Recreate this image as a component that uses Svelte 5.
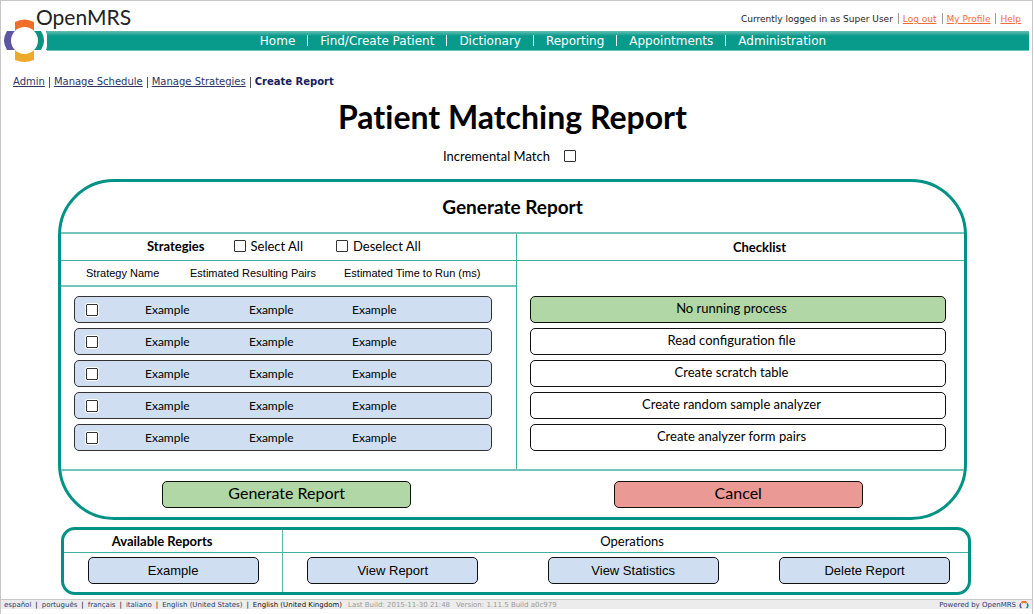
<script>
  const navItems = ['Home', 'Find/Create Patient', 'Dictionary', 'Reporting', 'Appointments', 'Administration'];
  const userLinks = ['Log out', 'My Profile', 'Help'];
  const crumbs = ['Admin', 'Manage Schedule', 'Manage Strategies'];
  const languages = ['español', 'português', 'français', 'italiano', 'English (United States)'];
  const steps = [
    'No running process',
    'Read configuration file',
    'Create scratch table',
    'Create random sample analyzer',
    'Create analyzer form pairs'
  ];
  const operations = ['View Report', 'View Statistics', 'Delete Report'];

  let incremental = $state(false);
  let selected = $state([false, false, false, false, false]);
  let selectAll = $state(false);
  let deselectAll = $state(false);

  function onSelectAll() {
    if (selectAll) {
      deselectAll = false;
      selected = selected.map(() => true);
    }
  }

  function onDeselectAll() {
    if (deselectAll) {
      selectAll = false;
      selected = selected.map(() => false);
    }
  }
</script>

<div class="page">
  <header>
    <svg class="logo" viewBox="0 0 46 46" aria-hidden="true">
      <path d="M14 4 Q23.500 -1 33 4 V22 H14Z" fill="#f26c2a" />
      <path d="M14 42 Q23.500 46 33 42 V22 H14Z" fill="#eda929" />
      <path d="M6 13 Q0 22.500 6 32 H14 V13Z" fill="#6055a3" />
      <path d="M40 13 Q46 22.500 40 32 H33 V13Z" fill="#0a9385" />
      <path d="M45 13 Q48 22.500 45 32 H46 V13Z" fill="#089a8b" />
      <circle cx="23.500" cy="22.500" r="13.500" fill="#fff" />
    </svg>
    <div class="top">
      <span class="brand">OpenMRS</span>
      <div class="user">
        <span class="who">Currently logged in as Super User</span>
        {#each userLinks as link}
          <a href="#top">{link}</a>
        {/each}
      </div>
    </div>
    <nav>
      {#each navItems as item}
        <a href="#top">{item}</a>
      {/each}
    </nav>
  </header>

  <div class="crumbs">
    {#each crumbs as crumb}
      <a href="#top">{crumb}</a><i></i>
    {/each}
    <b>Create Report</b>
  </div>

  <main>
    <h1>Patient Matching Report</h1>
    <label class="incremental">Incremental Match <input type="checkbox" bind:checked={incremental} /></label>

    <section class="generate">
      <h2>Generate Report</h2>
      <div class="halves">
        <div class="strategies">
          <div class="bar">
            <h3>Strategies</h3>
            <label><input type="checkbox" bind:checked={selectAll} onchange={onSelectAll} />Select All</label>
            <label><input type="checkbox" bind:checked={deselectAll} onchange={onDeselectAll} />Deselect All</label>
          </div>
          <table>
            <thead>
              <tr>
                <th class="span" colspan="2">Strategy Name</th>
                <th>Estimated Resulting Pairs</th>
                <th>Estimated Time to Run (ms)</th>
              </tr>
            </thead>
            <tbody>
              {#each selected as _, i}
                <tr>
                  <td><input type="checkbox" aria-label="Example" bind:checked={selected[i]} /></td>
                  <td class="name">Example</td>
                  <td class="pairs">Example</td>
                  <td class="time">Example</td>
                </tr>
              {/each}
            </tbody>
          </table>
        </div>
        <div class="checklist">
          <div class="bar"><h3>Checklist</h3></div>
          <ul>
            {#each steps as step, i}
              <li class:done={i === 0}>{step}</li>
            {/each}
          </ul>
        </div>
      </div>
      <div class="actions">
        <button class="go">Generate Report</button>
        <button class="cancel">Cancel</button>
      </div>
    </section>

    <section class="reports">
      <div class="available">
        <h3>Available Reports</h3>
        <div class="cell"><button>Example</button></div>
      </div>
      <div class="operations">
        <h3>Operations</h3>
        <div class="cell">
          {#each operations as operation}
            <button>{operation}</button>
          {/each}
        </div>
      </div>
    </section>
  </main>

  <footer>
    <div class="langs">
      {#each languages as language}
        <a href="#top">{language}</a><span>|</span>
      {/each}
      <span class="current">English (United Kingdom)</span>
    </div>
    <span class="build">Last Build: 2015-11-30 21:48</span>
    <span class="build">Version: 1.11.5 Build a0c979</span>
    <a class="powered" href="#top">Powered by OpenMRS
      <svg viewBox="0 0 10 8" aria-hidden="true">
        <path d="M2.500 2 Q5 -.5 7.500 2" stroke="#f26c2a" stroke-width="2" fill="none" />
        <path d="M2 2.500 Q0 5 2.500 7" stroke="#6055a3" stroke-width="1.500" fill="none" />
        <path d="M8 2.500 Q10 5 7.500 7" stroke="#0a9385" stroke-width="1.500" fill="none" />
      </svg>
    </a>
  </footer>
</div>

<style>
  :global(body) { background: #fff; }
  .page {
    box-sizing: border-box;
    min-height: 100vh;
    margin-right: 1px;
    border: 1px solid #c8c8c8;
    border-bottom: 0;
    font-family: Lato, sans-serif;
    color: #000;
  }
  header {
    display: grid;
    grid-template-columns: 46px 1fr;
    grid-template-rows: 30px 20px 13px;
    padding-right: 3px;
    font-family: "DejaVu Sans", sans-serif;
  }
  .logo { grid-row: 1 / 4; width: 46px; height: 46px; margin-top: 17px; }
  .top { display: flex; justify-content: space-between; }
  .brand {
    margin: 3px 0 0 -11px;
    font: 21px/26px Lato, sans-serif;
    color: #222;
  }
  .user { display: flex; margin: 12px 8px 0 0; font-size: 9px; line-height: 12px; color: #222; }
  .user a { margin-left: 5px; padding-left: 4px; border-left: 1px solid #999; height: 11px; color: #f26c3a; }
  nav {
    display: flex;
    justify-content: center;
    box-sizing: border-box;
    padding-left: 10px;
    border-bottom: 1px solid #6fc4ba;
    background: linear-gradient(#68bfb5, #089a8b 5px);
    font-size: 12px;
    line-height: 20px;
  }
  nav a { display: flex; align-items: center; color: #fff; text-decoration: none; }
  nav a + a::before { content: ""; width: 1px; height: 11px; margin: 0 12px; background: #fff; }
  .crumbs {
    display: flex;
    align-items: center;
    padding: 10px 12px 0;
    font: 10px/16px "DejaVu Sans", sans-serif;
    color: #14215c;
  }
  .crumbs a { color: #2c3566; }
  .crumbs i { width: 1px; height: 11px; margin: 0 4px; background: #555; }
  h1, h2, h3 { margin: 0; text-align: center; }
  main { padding: 0 65px 0 57px; }
  h1 { padding-top: 7px; font-size: 32px; line-height: 40px; font-variant-ligatures: none; }
  input {
    appearance: none;
    box-sizing: border-box;
    width: 12px;
    height: 12px;
    margin: 0;
    border: 1px solid #333;
    border-radius: 1px;
    background: #fff;
  }
  input:checked { background: #009284; }
  label { display: flex; align-items: center; font-size: 13px; }
  .incremental { justify-content: center; gap: 14px; padding: 9px 6px 13px 0; line-height: 20px; }
  .generate { border: 3px solid #009284; border-radius: 56px; }
  h2 { font-size: 19px; line-height: 50px; }
  .halves {
    display: grid;
    grid-template-columns: 455fr 448fr;
    border: solid #73c5bb;
    border-width: 2px 0;
  }
  .checklist { border-left: 1px solid #3fb0a3; }
  .bar {
    display: flex;
    align-items: center;
    justify-content: center;
    box-sizing: border-box;
    height: 27px;
    border-bottom: 1px solid #3fb0a3;
  }
  h3 { font-size: 13px; line-height: 24px; }
  .strategies .bar { justify-content: flex-start; padding: 0 0 3px 86px; }
  .strategies .bar h3 { margin-right: 29px; }
  .bar label { gap: 5px; margin-right: 33px; }
  .checklist .bar { padding-left: 38px; }
  table, tbody { display: block; }
  thead { display: block; border-bottom: 2px solid #73c5bb; padding: 0 24px 0 13px; }
  tr { display: grid; grid-template-columns: 36px 72px 154px 1fr; align-items: center; }
  th { padding: 0 0 0 8px; text-align: left; white-space: nowrap; font: 11px/24px "Liberation Sans", sans-serif; }
  .span { grid-column: span 2; padding-left: 12px; }
  tbody { padding: 9px 24px 18px 13px; }
  tbody tr {
    box-sizing: border-box;
    height: 27px;
    border: 1px solid #333;
    border-radius: 5px;
    background: #cfdff1;
    font-size: 12px;
  }
  tbody tr + tr { margin-top: 5px; }
  td { padding: 0; }
  td:first-child { display: flex; padding-left: 11px; }
  td input { outline: 1px solid #fff; }
  .name { padding-left: 34px; }
  .pairs { padding-left: 66px; }
  .time { padding-left: 15px; }
  ul { display: grid; gap: 5px; margin: 0; padding: 35px 18px 18px 13px; list-style: none; }
  li {
    box-sizing: border-box;
    height: 27px;
    border: 1px solid #111;
    border-radius: 5px;
    padding-right: 13px;
    text-align: center;
    font-size: 13px;
    line-height: 22px;
  }
  .done { background: #b0d7a5; }
  .actions { display: grid; grid-template-columns: 1fr 1fr; justify-items: center; padding: 10px 0 9px; }
  button {
    box-sizing: border-box;
    width: 171px;
    height: 27px;
    padding: 0;
    border: 1px solid #111;
    border-radius: 5px;
    background: #cfdff1;
    color: #000;
    font: 13px/24px "Liberation Sans", sans-serif;
  }
  .actions button { width: 249px; font: 16px/22px Lato, sans-serif; padding-bottom: 4px; }
  .actions .go { background: #b0d7a5; }
  .actions .cancel { background: #eb9994; }
  .reports {
    display: grid;
    grid-template-columns: 218fr 685fr;
    margin: 7px -4px 0 3px;
    border: 3px solid #009284;
    border-radius: 14px;
  }
  .operations { border-left: 1px solid #59b9ad; }
  .reports h3 { height: 22px; line-height: 22px; border-bottom: 1px solid #3fb0a3; }
  .available h3 { padding-right: 22px; }
  .operations h3 { padding-left: 13px; font-weight: 400; }
  .cell { display: grid; padding: 4px 0 8px; justify-items: center; }
  .operations .cell { grid-template-columns: 240fr 231fr 171px; justify-items: start; padding: 4px 18px 8px 24px; }
  footer {
    display: flex;
    gap: 6px;
    height: 9px;
    margin-top: 4px;
    padding: 0 3px;
    border-top: 1px solid #c8c8c8;
    background: #ececec;
    overflow: hidden;
    font: 7px/11px "DejaVu Sans", sans-serif;
    white-space: nowrap;
  }
  .langs { display: flex; gap: 4px; }
  footer a { color: #2a3b6e; text-decoration: none; }
  .current { color: #111; }
  .build { color: #999; }
  .powered { display: flex; gap: 3px; margin-left: auto; }
  .powered svg { width: 10px; height: 8px; margin-top: 1px; }
</style>
